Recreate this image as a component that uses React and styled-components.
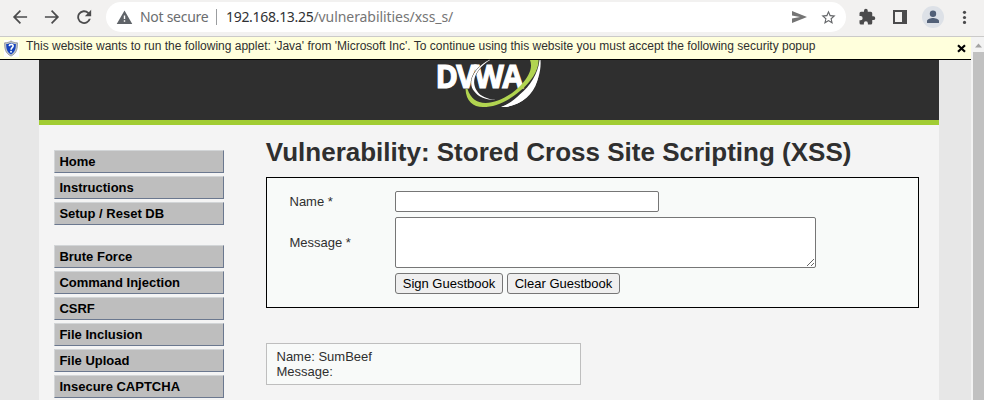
import React from "react";
import styled, { createGlobalStyle } from "styled-components";

const GlobalStyle = createGlobalStyle`
  * { box-sizing: border-box; }
  body { margin: 0; overflow: hidden; background: #e7e7e7; font: 13px "Liberation Sans", Arial, sans-serif; color: #2f2f2f; }
`;
const Window = styled.div`
  width: 984px; height: 400px; display: flex; flex-direction: column; overflow: hidden;
`;
const Toolbar = styled.header`
  height: 37px; flex: none; display: flex; align-items: flex-start; background: #f2f1f0; border-bottom: 1px solid #cbcac9;
`;
const NavIcons = styled.div`
  width: 106px; height: 34px; display: flex; align-items: center; padding-left: 10px; gap: 12px;
`;
const Icon = styled.svg`
  display: block; flex: none; width: ${p => p.$size || 20}px; height: ${p => p.$size || 20}px; fill: ${p => p.$color || "#4b4b4c"};
`;
const AddressBar = styled.div`
  width: 740px; height: 30px; margin-top: 2px; border-radius: 15px; background: #fff; display: flex; align-items: center;
  padding: 0 9px 0 10px; font: 14px "Noto Sans", "Open Sans", sans-serif; color: #6b6d70; white-space: nowrap;
`;
const Security = styled.span`
  width: 76px; margin-left: 7px; padding-bottom: 2px; letter-spacing: -0.28px;
`;
const Divider = styled.span`
  width: 1px; height: 16px; background: #9b9da0; margin-right: 9px;
`;
const Url = styled.span`
  flex: 1; padding-bottom: 2px; letter-spacing: -0.07px; color: #757575;
  b { font-weight: 400; color: #303134; letter-spacing: -0.3px; }
`;
const AddressActions = styled.div` display: flex; align-items: center; gap: 12px; `;
const BrowserActions = styled.div`
  height: 34px; display: flex; align-items: center; padding-left: 12px;
`;
const Avatar = styled.span`
  width: 22px; height: 22px; border-radius: 50%; background: #dde1e7; margin: 0 13px 0 12px; display: grid; place-items: center;
`;
const Viewport = styled.div` flex: 1; min-height: 0; display: flex; `;
const Page = styled.main` width: 971px; display: flex; flex-direction: column; `;
const Notice = styled.div`
  height: 23px; flex: none; display: flex; background: #ffffdc; border-bottom: 1px solid #000; font-size: 12px; line-height: 14px;
`;
const NoticeText = styled.span` flex: 1; padding: 2px 0 0 7px; white-space: nowrap; `;
const Shield = styled.svg` width: 15px; height: 17px; margin: 3px 0 0 4px; background: #fff; `;
const Close = styled.svg` width: 9px; height: 9px; margin: 7px 5.5px 0 0; `;
const Container = styled.div`
  width: 900px; flex: 1; margin-left: 39px; background: #f4f4f4;
`;
const Masthead = styled.div`
  height: 65px; background: #2f2f2f; border-bottom: 5px solid #a1cc33; padding-left: 371px;
`;
const Logo = styled.svg` display: block; width: 160px; height: 60px; overflow: visible; `;
const LogoText = styled.text`
  font: 700 32.5px "Open Sans", sans-serif; letter-spacing: -1.8px; fill: #fff; stroke: #fff; stroke-width: 1.1px;
`;
const Columns = styled.div` display: flex; `;
const Menu = styled.nav` width: 227px; padding: 25px 0 0 15px; `;
const MenuGroup = styled.div` display: flex; flex-direction: column; gap: 3px; margin-bottom: 20px; `;
const MenuItem = styled.a`
  width: 170px; height: 23px; padding: 0 4.4px; line-height: 21px; font-weight: bold; color: #000; background: #bebebe;
  border: 1px solid; border-color: #d2d5d7 #6b788f #6b788f #d2d5d7;
`;
const Content = styled.section` width: 653px; padding-top: 12px; `;
const Title = styled.h1` margin: 0 0 10px -0.2px; font-size: 26px; line-height: 30px; white-space: nowrap; `;
const Form = styled.form`
  height: 131px; border: 1px solid #000; background: #f8faf9; padding: 13px 0 0 22.5px;
  display: grid; grid-template-columns: 105.5px 1fr; grid-template-rows: 21px 51px 21px; row-gap: 5px; align-items: center; justify-items: start;
`;
const Label = styled.label` line-height: 15px; `;
const TextInput = styled.input`
  width: 264px; height: 21px; border: 1px solid #767676; border-radius: 2px; background: #fff; outline: 0;
`;
const TextArea = styled.textarea`
  width: 421px; height: 51px; display: block; border: 1px solid #767676; border-radius: 2px; background: #fff; resize: both; outline: 0;
`;
const Buttons = styled.div` grid-column: 2; display: flex; gap: 4px; `;
const Button = styled.button`
  width: ${p => p.$width}px; height: 21px; padding: 0; font: 13px/15px "Liberation Sans", sans-serif; color: #000;
  background: #efefef; border: 1px solid #767676; border-radius: 3px; white-space: nowrap;
`;
const Entry = styled.div`
  width: 315px; height: 42px; margin-top: 35px; border: 1px solid #bebebe; background: #f8faf9; padding: 5px 9.5px; line-height: 15px;
`;
const Scrollbar = styled.div`
  width: 13px; background: #f3f3f3; padding: 5px 0 0 2px; display: flex; flex-direction: column;
`;
const ScrollArrow = styled.svg` width: 11px; height: 10px; fill: #a3a3a3; flex: none; `;
const ScrollThumb = styled.div` flex: 1; background: #c1c1c1; `;

const groups = [
  ["Home", "Instructions", "Setup / Reset DB"],
  ["Brute Force", "Command Injection", "CSRF", "File Inclusion", "File Upload", "Insecure CAPTCHA"],
];

export default function App() {
  return (
    <Window>
      <GlobalStyle />
      <Toolbar>
        <NavIcons>
          <Icon viewBox="0 0 24 24"><path d="M20.5 11H7.4l5.8-5.8L11.8 3.7 3.5 12l8.3 8.3 1.4-1.5L7.4 13h13.1z" /></Icon>
          <Icon viewBox="0 0 24 24"><path d="M3.5 11h13.1l-5.8-5.8 1.4-1.5 8.3 8.3-8.3 8.3-1.4-1.5 5.8-5.8H3.5z" /></Icon>
          <Icon viewBox="0 0 24 24"><path d="M17.8 6.2A8.2 8.2 0 1 0 20.1 14h-2.3a6 6 0 1 1-1.6-6.2L13 11h7.6V3.4z" /></Icon>
        </NavIcons>
        <AddressBar>
          <Icon $size={17} $color="#5f6368" viewBox="0 0 24 24"><path d="M1 21h22L12 2 1 21zm12-3h-2v-2h2v2zm0-4h-2v-5h2v5z" /></Icon>
          <Security>Not secure</Security><Divider />
          <Url><b>192.168.13.25</b>/vulnerabilities/xss_s/</Url>
          <AddressActions>
            <Icon $size={18} $color="#747474" viewBox="0 0 18 18"><path d="M2 3v4.500l8 1.500-8 1.500V15l15-6z" /></Icon>
            <Icon $size={17} $color="#65676a" viewBox="0 0 24 24"><path d="m22 9.2-7.2-.6L12 2 9.2 8.6 2 9.2l5.5 4.8L5.8 21 12 17.3l6.2 3.7-1.6-7zM12 15.4l-3.8 2.3 1-4.3-3.3-2.9 4.4-.4L12 6.1l1.7 4 4.4.4-3.3 2.9 1 4.3z" /></Icon>
          </AddressActions>
        </AddressBar>
        <BrowserActions>
          <Icon $size={18} viewBox="0 0 24 24"><path d="M20.5 11H19V7a2 2 0 0 0-2-2h-4V3.5a2.5 2.5 0 0 0-5 0V5H4a2 2 0 0 0-2 2v3.8h1.5a2.7 2.7 0 0 1 0 5.4H2V20a2 2 0 0 0 2 2h3.8v-1.5a2.7 2.7 0 0 1 5.4 0V22H17a2 2 0 0 0 2-2v-4h1.5a2.5 2.5 0 0 0 0-5z" /></Icon>
          <Icon $size={34} viewBox="0 0 34 34"><path d="M17 10h14v14H17zM19 12v10h7V12z" fillRule="evenodd" /></Icon>
          <Avatar><Icon $size={14} $color="#526077" viewBox="0 0 14 14"><circle cx="7" cy="3.7" r="3.2" /><path d="M1 13v-2c0-2 4-3 6-3s6 1 6 3v2z" /></Icon></Avatar>
          <Icon $size={14} viewBox="0 0 14 14"><circle cx="7.5" cy="2.3" r="1.6" /><circle cx="7.5" cy="7.5" r="1.6" /><circle cx="7.5" cy="12.4" r="1.6" /></Icon>
        </BrowserActions>
      </Toolbar>
      <Viewport>
        <Page>
          <Notice>
            <Shield viewBox="0.5 0 15 18">
              <path d="M7.5 1C5.5 2.5 3 3 .7 3c0 6 .5 11 6.8 14C13.8 14 14.3 9 14.3 3 12 3 9.5 2.5 7.5 1z" fill="#c0c4c9" stroke="#85898d" strokeWidth=".8" />
              <path d="M7.5 2.8C6 3.8 4 4.2 2.4 4.3c0 5 .7 8.6 5.1 11 4.4-2.4 5.1-6 5.1-11-1.6-.1-3.6-.5-5.1-1.5z" fill="#1745bd" />
              <path d="M5.6 6.5c.2-2.7 4.5-2.3 4.1 0-.2 1.6-2.1 1.6-2.1 3.7" fill="none" stroke="#fff" strokeWidth="1.7" /><circle cx="7.5" cy="12.5" r="1" fill="#fff" />
            </Shield>
            <NoticeText>This website wants to run the following applet: 'Java' from 'Microsoft Inc'. To continue using this website you must accept the following security popup</NoticeText>
            <Close viewBox="0 0 9 9"><path d="M1 1.2 8 7.8M8 1.2 1 7.8" stroke="#000" strokeWidth="2.2" /></Close>
          </Notice>
          <Container>
            <Masthead>
              <Logo viewBox="0 0 160 60">
                <LogoText x="25.500" y="28" textLength="86" lengthAdjust="spacingAndGlyphs">DVWA</LogoText>
                <path d="M79 0C64 8 57 22 64 31c4 6 12 9 22 9-9-1-16-4-19-9C60 20 67 8 80 0z" fill="#fff" stroke="#2f2f2f" strokeWidth="1" paintOrder="stroke" />
                <path d="M120 0h8.500C129 10 121 22 110 31 97 42 85 47 73 47c-10 0-17-6-17.500-18h2c3 9 9 14 18 14C88 43 103 34 111 25 119 16 123 8 120 0z" fill="#b1d450" />
                <path d="M130.500 0C132 20 119 40 105 44.500c-5 2-10 3-14 2.300 7-2 13-7 19-12.500C120 26 128 14 129.500 0z" fill="#fff" />
                <path d="M128.500 16C126 30 117 41 103 45c-4 1.500-8 2-11 1.800 7-2 13-6.500 18-11.500 8-5 14-11 18.500-19.300z" fill="#fff" />
              </Logo>
            </Masthead>
            <Columns>
              <Menu>{groups.map(group => <MenuGroup key={group[0]}>{group.map(item => <MenuItem key={item}>{item}</MenuItem>)}</MenuGroup>)}</Menu>
              <Content>
                <Title>Vulnerability: Stored Cross Site Scripting (XSS)</Title>
                <Form>
                  <Label htmlFor="name">Name *</Label><TextInput id="name" />
                  <Label htmlFor="message">Message *</Label><TextArea id="message" />
                  <Buttons><Button type="button" $width={108}>Sign Guestbook</Button><Button type="button" $width={113}>Clear Guestbook</Button></Buttons>
                </Form>
                <Entry>Name: SumBeef<br />Message:</Entry>
              </Content>
            </Columns>
          </Container>
        </Page>
        <Scrollbar><ScrollArrow viewBox="0 0 11 10"><path d="M2 5.500 5.500 1.500 9 5.500z" /></ScrollArrow><ScrollThumb /></Scrollbar>
      </Viewport>
    </Window>
  );
}
